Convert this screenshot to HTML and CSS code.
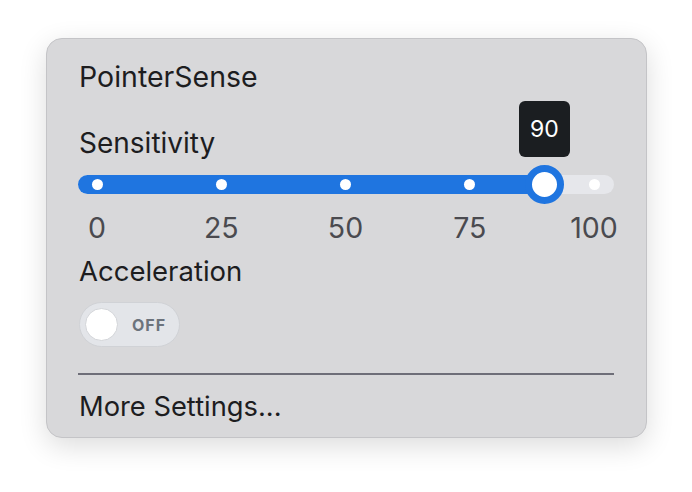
FILE: index.html
```html
<!DOCTYPE html>
<html>
<head>
<meta charset="utf-8">
<link rel="stylesheet" href="styles.css">
</head>
<body>
<div class="card">
  <div class="title">PointerSense</div>
  <div class="label">Sensitivity</div>
  <div class="slider">
    <div class="track">
      <div class="fill" style="width: 466px"></div>
      <span class="dot" style="left: 19px"></span>
      <span class="dot" style="left: 143px"></span>
      <span class="dot" style="left: 267px"></span>
      <span class="dot" style="left: 391px"></span>
      <span class="dot" style="left: 516px"></span>
    </div>
    <div class="thumb" style="left: 466px"></div>
    <div class="tooltip" style="left: 441px">90</div>
  </div>
  <div class="ticks">
    <span>0</span><span>25</span><span>50</span><span>75</span><span>100</span>
  </div>
  <div class="label accel">Acceleration</div>
  <div class="toggle">
    <span class="knob"></span>
    <span class="state">OFF</span>
  </div>
  <div class="divider"></div>
  <div class="more">More Settings...</div>
</div>
</body>
</html>
```
FILE: styles.css
```css
* { box-sizing: border-box; }
html, body { margin: 0; padding: 0; }
body {
  background: #ffffff;
  font-family: Inter, "Noto Sans", sans-serif;
  width: 692px;
  height: 492px;
}
.card {
  margin: 38px 0 0 46px;
  width: 601px;
  height: 400px;
  background: #d8d8da;
  border: 1px solid #c4c4c7;
  border-radius: 16px;
  box-shadow: 0 8px 28px rgba(0, 0, 0, 0.14);
  padding: 24px 32px 0 32px;
}
.title {
  font-size: 28.5px;
  line-height: 28px;
  color: #1d1d1f;
}
.label {
  font-size: 28px;
  line-height: 28px;
  color: #1d1d1f;
  margin-top: 38px;
}
.slider {
  position: relative;
  margin-top: 18px;
  margin-left: -1px;
  width: 536px;
  height: 20px;
}
.track {
  position: relative;
  height: 19px;
  border-radius: 10px;
  background: #e6e7eb;
  overflow: hidden;
}
.fill {
  position: absolute;
  left: 0; top: 0; bottom: 0;
  background: #1f75e0;
}
.dot {
  position: absolute;
  top: 4px;
  width: 11px;
  height: 11px;
  margin-left: -5.5px;
  border-radius: 50%;
  background: #ffffff;
}
.thumb {
  position: absolute;
  top: -10px;
  width: 39px;
  height: 39px;
  margin-left: -19.5px;
  border-radius: 50%;
  background: #ffffff;
  border: 7.5px solid #1f75e0;
}
.tooltip {
  position: absolute;
  top: -74px;
  width: 51px;
  height: 56px;
  background: #1b1e21;
  color: #ffffff;
  border-radius: 6px;
  font-size: 23px;
  display: flex;
  align-items: center;
  justify-content: center;
}
.ticks {
  display: flex;
  justify-content: space-between;
  margin-top: 19px;
  margin-left: -6px;
  width: 545px;
  font-size: 28.5px;
  line-height: 28px;
  color: #4a4a4f;
}
.ticks span {
  width: 48px;
  text-align: center;
}
.label.accel { margin-top: 15px; font-size: 27.5px; }
.toggle {
  margin-top: 17px;
  width: 101px;
  height: 45px;
  border-radius: 23px;
  background: #e3e5e9;
  border: 1px solid #d0d2d6;
  display: flex;
  align-items: center;
  padding-left: 5px;
  gap: 14px;
}
.knob {
  width: 33px;
  height: 33px;
  border-radius: 50%;
  background: #ffffff;
  border: 1px solid #d3d5d9;
}
.state {
  font-size: 16px;
  font-weight: 700;
  color: #6c737c;
  letter-spacing: 1px;
}
.divider {
  margin-top: 26px;
  margin-left: -1px;
  width: 536px;
  height: 2px;
  background: #6e6e78;
}
.more {
  margin-top: 18px;
  font-size: 27.3px;
  line-height: 28px;
  color: #1d1d1f;
}
```
